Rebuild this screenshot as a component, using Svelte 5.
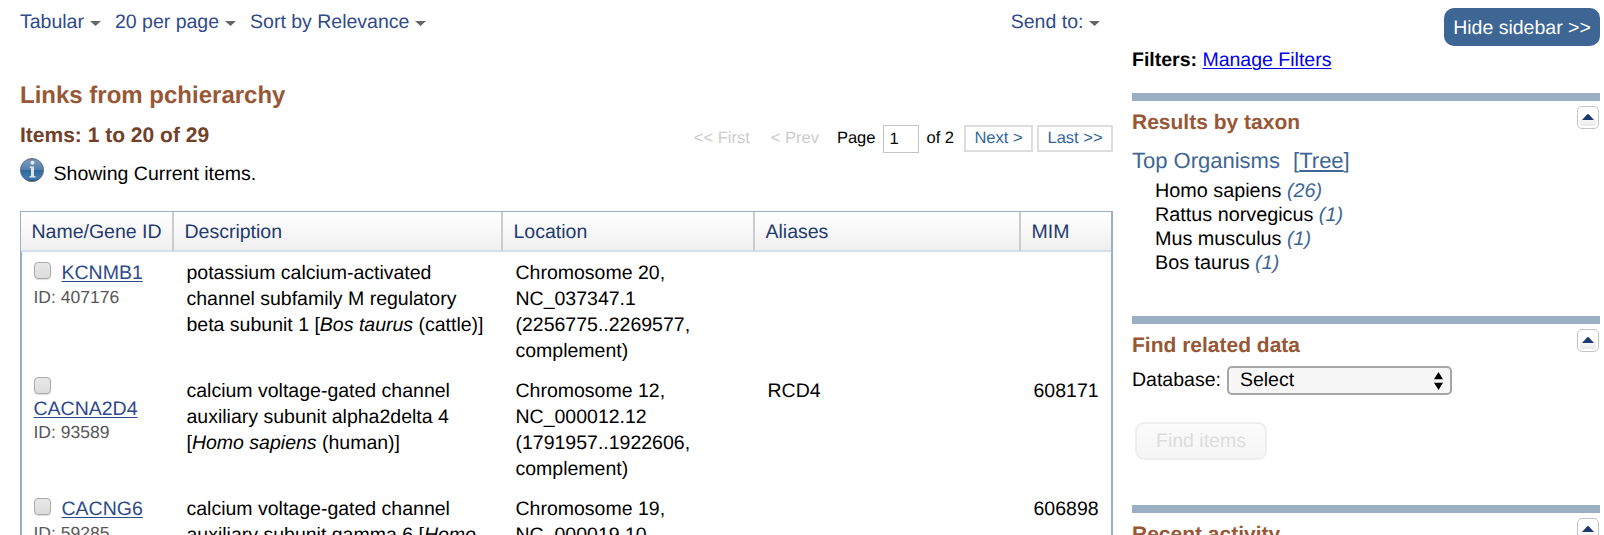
<script>
  const genes = [
    {
      name: 'KCNMB1', id: 407176, wrapped: false,
      before: ['potassium calcium-activated', 'channel subfamily M regulatory'],
      last: 'beta subunit 1 [', species: 'Bos taurus', after: ' (cattle)]',
      location: ['Chromosome 20,', 'NC_037347.1', '(2256775..2269577,', 'complement)'],
      aliases: '', mim: ''
    },
    {
      name: 'CACNA2D4', id: 93589, wrapped: true,
      before: ['calcium voltage-gated channel', 'auxiliary subunit alpha2delta 4'],
      last: '[', species: 'Homo sapiens', after: ' (human)]',
      location: ['Chromosome 12,', 'NC_000012.12', '(1791957..1922606,', 'complement)'],
      aliases: 'RCD4', mim: '608171'
    },
    {
      name: 'CACNG6', id: 59285, wrapped: false,
      before: ['calcium voltage-gated channel'],
      last: 'auxiliary subunit gamma 6 [', species: 'Homo', after: '',
      location: ['Chromosome 19,', 'NC_000019.10'],
      aliases: '', mim: '606898'
    }
  ];
  const taxa = [['Homo sapiens', 26], ['Rattus norvegicus', 1], ['Mus musculus', 1], ['Bos taurus', 1]];
  const columns = ['Name/Gene ID', 'Description', 'Location', 'Aliases', 'MIM'];
</script>

{#snippet caret()}
  <svg class="caret" width="11" height="5" viewBox="0 0 11 5"><path d="M0 0H11L5.5 5Z" fill="#666" /></svg>
{/snippet}

{#snippet toggle()}
  <button class="toggle" aria-label="Collapse">
    <svg width="12" height="6" viewBox="0 0 12 6"><path d="M0 6L5 .5Q6-.4 7 .5L12 6Z" fill="#1c3a70" /></svg>
  </button>
{/snippet}

<div class="page">
  <main>
    <nav class="toolbar">
      <a href="#display">Tabular{@render caret()}</a>
      <a href="#size">20 per page{@render caret()}</a>
      <a href="#sort">Sort by Relevance{@render caret()}</a>
      <a href="#send" class="send">Send to:{@render caret()}</a>
    </nav>
    <h1>Links from pchierarchy</h1>
    <div class="summary">
      <div>
        <h2>Items: 1 to 20 of 29</h2>
        <div class="notice">
          <svg width="24" height="24" viewBox="0 0 24 24">
            <defs>
              <linearGradient id="ball" x1="0" y1="0" x2="0" y2="1">
                <stop offset="0" stop-color="#6f8090" />
                <stop offset=".12" stop-color="#7396b8" />
                <stop offset=".48" stop-color="#4f80ae" />
                <stop offset=".5" stop-color="#336797" />
                <stop offset=".85" stop-color="#3f7eb4" />
                <stop offset="1" stop-color="#28496a" />
              </linearGradient>
            </defs>
            <circle cx="12" cy="12" r="11.6" fill="url(#ball)" stroke="#55687c" stroke-width=".8" />
            <circle cx="12.5" cy="4.8" r="2" fill="#e6e9ee" />
            <path d="M9.7 8.4H14V18H15.4V19.6H9.6V18H11V10H9.7Z" fill="#dfe4ea" />
          </svg>
          <span>Showing Current items.</span>
        </div>
      </div>
      <div class="pager">
        <span class="off first">&lt;&lt; First</span>
        <span class="off prev">&lt; Prev</span>
        <span class="label">Page</span>
        <input value="1" aria-label="Page" />
        <span class="total">of 2</span>
        <a class="step next" href="#next">Next &gt;</a>
        <a class="step last" href="#last">Last &gt;&gt;</a>
      </div>
    </div>

    <div class="table">
      <div class="grid head">
        {#each columns as c}<div>{c}</div>{/each}
      </div>
      <div class="body">
        {#each genes as g}
          <div class="grid row">
            <div class="gene" class:wrapped={g.wrapped}>
              <div class="pick"><span class="check"></span><a href="#gene">{g.name}</a></div>
              <div class="id">ID: {g.id}</div>
            </div>
            <div>
              {#each g.before as line}{line}<br />{/each}{g.last}<i>{g.species}</i>{g.after}
            </div>
            <div>{#each g.location as line}{line}<br />{/each}</div>
            <div>{g.aliases}</div>
            <div>{g.mim}</div>
          </div>
        {/each}
      </div>
    </div>
  </main>

  <aside>
    <button class="hide">Hide sidebar &gt;&gt;</button>
    <div class="filters"><b>Filters:</b> <a href="#filters">Manage Filters</a></div>
    <section class="taxon">
      <header><h3>Results by taxon</h3>{@render toggle()}</header>
      <div class="top">Top Organisms <a href="#tree">[<u>Tree</u>]</a></div>
      <ul>
        {#each taxa as [name, n]}<li>{name} <i>({n})</i></li>{/each}
      </ul>
    </section>
    <section class="related">
      <header><h3>Find related data</h3>{@render toggle()}</header>
      <div class="database">
        <span>Database:</span>
        <div class="select">Select
          <svg width="9" height="18" viewBox="0 0 9 18"><path d="M4.5 0L9 7.3H0ZM0 10.7H9L4.5 18Z" /></svg>
        </div>
      </div>
      <button class="find" disabled>Find items</button>
    </section>
    <section>
      <header><h3>Recent activity</h3>{@render toggle()}</header>
    </section>
  </aside>
</div>

<style>
  :global(body) { background: #fff; }
  .page {
    box-sizing: border-box;
    display: flex;
    gap: 19px;
    width: 1604px;
    height: 535px;
    padding: 8px 4px 0 20px;
    overflow: hidden;
    font: 19.5px/26px Arial, "Liberation Sans", sans-serif;
    color: #000;
    text-rendering: geometricPrecision;
  }
  .page * { box-sizing: border-box; }
  main { width: 1093px; flex: none; }
  h1, h2, h3, ul { margin: 0; padding: 0; }
  button, input { font: inherit; text-rendering: inherit; }

  .toolbar { display: flex; height: 27px; padding-top: 1px; }
  .toolbar a { color: #2f4a8b; text-decoration: none; margin-right: 14.4px; white-space: nowrap; }
  .toolbar .send { margin-left: auto; margin-right: 13px; }
  .caret { margin-left: 5.6px; vertical-align: 2px; }

  h1 { margin-top: 46px; font-size: 24px; line-height: 30px; color: #985735; }
  .summary { display: flex; justify-content: space-between; height: 100px; }
  h2 { margin-top: 12px; font-size: 21px; line-height: 26px; color: #724128; }
  .notice { display: flex; gap: 9.6px; margin-top: 9px; }
  .notice span { margin-top: 3px; }

  .pager { display: flex; align-items: flex-start; padding-top: 14px; font-size: 16.5px; line-height: 27px; white-space: nowrap; }
  .off { color: #ccc; }
  .first { margin-right: 21px; }
  .prev { margin-right: 18px; }
  .label { margin-right: 8px; }
  .pager input { width: 36px; height: 28px; padding: 0 0 0 5px; border: 1px solid #c4c4c4; background: #fff; outline: 0; }
  .total { margin: 0 10px 0 7px; }
  .step { height: 27px; line-height: 23px; border: 2px solid #ddd; color: #336699; text-decoration: none; text-align: center; }
  .next { width: 69px; margin-right: 4px; }
  .last { width: 76px; }

  .table { border-top: 1px solid #97b0c8; }
  .grid { display: grid; grid-template-columns: 152px 329px 252px 266px 1fr; }
  .head {
    height: 40px;
    border: solid #97b0c8;
    border-width: 0 2px 0 1px;
    background: linear-gradient(#fff, #efefef);
    color: #1f3a70;
    grid-template-columns: 151px 329px 252px 266px 1fr;
    box-shadow: inset 0 -2px #d5dfeb;
  }
  .head div { height: 39px; padding: 7px 0 0 10.5px; border-left: 2px solid #ccc; }
  .head div:first-child { border-left: 0; }
  .body { border: solid #97b0c8; border-width: 0 2px; }
  .row { height: 118px; padding-top: 8px; grid-template-columns: 150px 329px 252px 266px 1fr; }
  .row > div { padding-left: 14.5px; white-space: nowrap; }
  .row > .gene { padding-left: 11.5px; }
  .pick { display: flex; gap: 11px; height: 25px; }
  .pick a { color: #2f4a8b; text-underline-offset: 2px; text-decoration-thickness: 1px; }
  .check { width: 17px; height: 17px; margin-top: 2px; border: 1px solid #aaa; border-radius: 4px; background: linear-gradient(#e8e8e8, #dcdcdc); box-shadow: 0 1px 1px #ddd; }
  .id { font-size: 17.55px; line-height: 24px; color: #575757; }
  .wrapped .pick { display: block; height: 43px; }
  .wrapped .check { display: block; margin: -1px 0 2px; }

  aside { width: 468px; flex: none; display: flex; flex-direction: column; }
  .hide { flex: none; width: 156px; height: 38px; align-self: flex-end; padding: 1px 0 0; border: 0; border-radius: 10px; background: #3d6695; color: #fff; white-space: nowrap; }
  .filters { flex: none; height: 47px; padding-top: 1px; }
  .filters a { color: #0000ee; text-underline-offset: 2px; text-decoration-thickness: 1px; }
  section { flex: none; border-top: 8px solid #9aaec4; }
  .taxon { height: 223px; }
  .related { height: 189px; }
  header { display: flex; justify-content: space-between; height: 41px; padding: 5px 1px 0 0; }
  h3 { margin-top: 4px; font-size: 21px; line-height: 26px; color: #985735; }
  .toggle { display: flex; align-items: center; justify-content: center; width: 22px; height: 23px; padding: 0 0 1px; border: 1.5px solid #c4c4c4; border-radius: 5px; background: linear-gradient(#fff 45%, #e4e4e4); box-shadow: inset 0 0 0 2px #fff; }
  .top { height: 31px; font-size: 22px; line-height: 30px; padding-top: 4px; color: #3d6695; }
  .top a { margin-left: 7px; color: inherit; text-decoration: none; }
  u { text-underline-offset: 2px; text-decoration-thickness: 2px; }
  ul { padding: 6px 0 0 23px; list-style: none; line-height: 24px; font-size: 19.8px; }
  ul i { color: #3d6695; }
  .database { display: flex; gap: 6px; height: 57px; padding-top: 1px; }
  .database span { margin-top: 1px; }
  .select { display: flex; justify-content: space-between; align-items: center; width: 225px; height: 29px; padding: 0 7px 2px 11px; border: 2px solid #a6a6a6; border-radius: 5px; background: #f7f7f7; }
  .select svg { margin-top: 2px; }
  .find { width: 132px; height: 38px; margin-left: 3px; padding: 0; border: 2px solid #eee; border-radius: 9px; background: linear-gradient(#fbfbfb, #f5f5f5); color: #ddd; }
</style>
